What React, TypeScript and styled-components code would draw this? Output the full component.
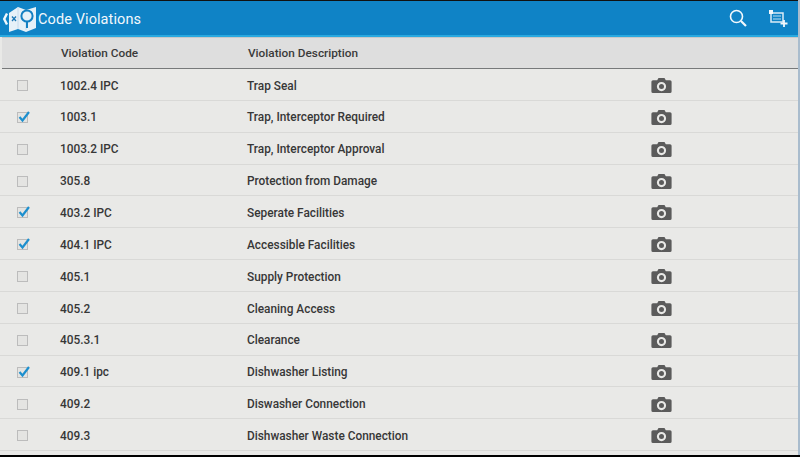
import React from 'react';
import styled, { createGlobalStyle } from 'styled-components';

interface Violation {
  code: string;
  description: string;
  checked?: boolean;
}

const violations: Violation[] = [
  { code: '1002.4 IPC', description: 'Trap Seal' },
  { code: '1003.1', description: 'Trap, Interceptor Required', checked: true },
  { code: '1003.2 IPC', description: 'Trap, Interceptor Approval' },
  { code: '305.8', description: 'Protection from Damage' },
  { code: '403.2 IPC', description: 'Seperate Facilities', checked: true },
  { code: '404.1 IPC', description: 'Accessible Facilities', checked: true },
  { code: '405.1', description: 'Supply Protection' },
  { code: '405.2', description: 'Cleaning Access' },
  { code: '405.3.1', description: 'Clearance' },
  { code: '409.1 ipc', description: 'Dishwasher Listing', checked: true },
  { code: '409.2', description: 'Diswasher Connection' },
  { code: '409.3', description: 'Dishwasher Waste Connection' },
];

const GlobalStyle = createGlobalStyle`
  html, body {
    margin: 0;
    padding: 0;
    background: #000;
  }

  body {
    font-family: Roboto, "Liberation Sans", sans-serif;
  }
`;

const Screen = styled.div`
  width: 800px;
  height: 457px;
  display: flex;
  flex-direction: column;
  overflow: hidden;
  background: #000;
`;

const Window = styled.div`
  height: 455px;
  display: flex;
  flex-direction: column;
  background: #e9e9e7;
  border-right: 2px solid #a9bccd;
  box-sizing: border-box;
`;

const ActionBar = styled.header`
  height: 37px;
  flex: none;
  display: flex;
  align-items: center;
  box-sizing: border-box;
  border-top: 1px solid #111;
  border-bottom: 2px solid #29a9e0;
  background: #0f83c6;
  color: #f2f8fc;
`;

const Title = styled.h1`
  margin: 2px 0 0 1px;
  font-size: 14.5px;
  font-weight: 400;
  letter-spacing: 0.1px;
`;

const Actions = styled.div`
  margin-left: auto;
  display: flex;
  align-items: center;
  gap: 22px;
  padding-right: 10px;
`;

const HeaderRow = styled.div`
  height: 32px;
  flex: none;
  display: grid;
  grid-template-columns: 59px 187px 1fr;
  align-items: center;
  box-sizing: border-box;
  margin-left: 2px;
  background: #dedede;
  border-top: 1px solid #c9c9c9;
  border-bottom: 1px solid #77797a;
  color: #3a3a3a;
  font-size: 11.8px;
  font-weight: 500;
`;

const HeaderCell = styled.span`
  &:first-child {
    grid-column: 2;
  }
`;

const Rows = styled.div`
  display: flex;
  flex-direction: column;
`;

const Row = styled.div`
  height: 31.85px;
  padding-top: 2.4px;
  display: grid;
  grid-template-columns: 60px 187px 404px 1fr;
  align-items: center;
  box-sizing: border-box;
  border-bottom: 1px solid #d9d9d7;
  color: #373737;
  font-size: 11.85px;
  font-weight: 500;
`;

const CheckCell = styled.div`
  position: relative;
  width: 11px;
  height: 11px;
  margin-left: 17px;
  box-sizing: border-box;
  border: 1px solid #bcbcbc;
  background: #e4e4e2;
`;

const Tick = styled.svg`
  position: absolute;
  left: -1px;
  top: -3px;
`;

const Camera = styled.svg`
  display: block;
`;

const CameraIcon = () => (
  <Camera width="21" height="17" viewBox="0 0 21 17">
    <path
      fill="#5b5b5b"
      fillRule="evenodd"
      d="M7.500 1h6l1.300 2.200H19a1.600 1.600 0 0 1 1.600 1.600v9.600a1.600 1.600 0 0 1-1.600 1.600H2a1.600 1.600 0 0 1-1.600-1.600V4.800A1.600 1.600 0 0 1 2 3.200h4.200L7.500 1zm3 4a4.600 4.600 0 1 0 0 9.200 4.600 4.600 0 0 0 0-9.200zm0 2.100a2.500 2.500 0 1 1 0 5 2.500 2.500 0 0 1 0-5z"
    />
  </Camera>
);

const BackLogo = () => (
  <svg width="37" height="32" viewBox="0 0 37 32">
    <path d="M7 11.500 4.200 17 7 22.500" fill="none" stroke="#f2f8fc" strokeWidth="2.400" />
    <path d="M9 11l9-6 8 3 10-3v21l-10 4-8-3-9 3z" fill="#e6f1f8" />
    <path d="M18 5v22M26 8v20" stroke="#bcd6e8" strokeWidth="0.800" />
    <path d="M12 14.500l4 4.500M16 14.500l-4 4.500" stroke="#1b77b5" strokeWidth="1.300" />
    <circle cx="27" cy="14" r="5.600" fill="#e6f1f8" stroke="#1480c2" strokeWidth="2" />
    <path d="M27 20v6" stroke="#1480c2" strokeWidth="2" />
  </svg>
);

const SearchIcon = () => (
  <svg width="18" height="18" viewBox="0 0 18 18">
    <circle cx="7.500" cy="7.500" r="6" fill="none" stroke="#f2f8fc" strokeWidth="1.600" />
    <path d="M12 12l5 5" stroke="#f2f8fc" strokeWidth="2.200" />
  </svg>
);

const AddListIcon = () => (
  <svg width="19" height="17" viewBox="0 0 19 17">
    <rect x="2" y="3" width="12" height="9" fill="none" stroke="#dcecf6" strokeWidth="1.500" />
    <rect x="0" y="0" width="4" height="4" fill="#f2f8fc" />
    <path d="M4 6h8M4 9h8" stroke="#bfe0f2" strokeWidth="1.200" />
    <path d="M15 10v7M11.500 13.500h7" stroke="#f2f8fc" strokeWidth="1.800" />
  </svg>
);

const App: React.FC = () => (
  <>
    <GlobalStyle />
    <Screen>
      <Window>
        <ActionBar>
          <BackLogo />
          <Title>Code Violations</Title>
          <Actions>
            <SearchIcon />
            <AddListIcon />
          </Actions>
        </ActionBar>
        <HeaderRow>
          <HeaderCell>Violation Code</HeaderCell>
          <HeaderCell>Violation Description</HeaderCell>
        </HeaderRow>
        <Rows>
          {violations.map((v) => (
            <Row key={v.code}>
              <CheckCell>
                {v.checked && (
                  <Tick width="14" height="13" viewBox="0 0 14 13">
                    <path d="M2.500 7l3 3.500L12 2" fill="none" stroke="#1c8fce" strokeWidth="2.200" />
                  </Tick>
                )}
              </CheckCell>
              <span>{v.code}</span>
              <span>{v.description}</span>
              <CameraIcon />
            </Row>
          ))}
        </Rows>
      </Window>
    </Screen>
  </>
);

export default App;
